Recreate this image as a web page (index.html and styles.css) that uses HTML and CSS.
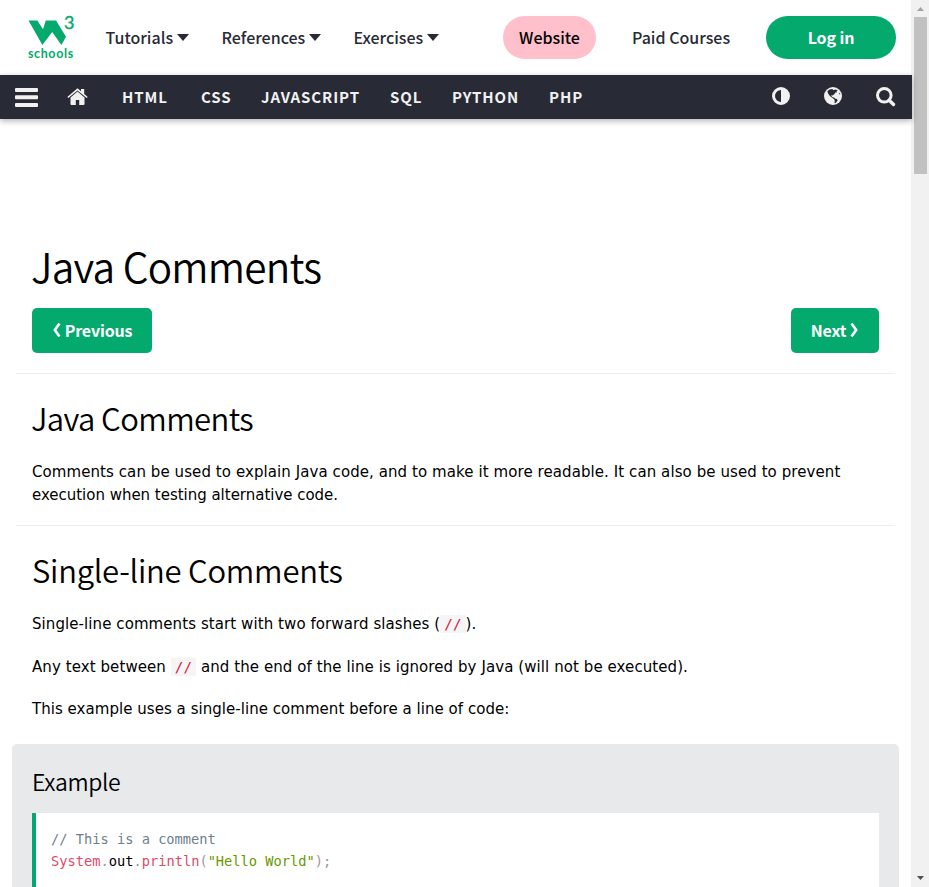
FILE: index.html
```
<!DOCTYPE html>
<html lang="en">
<head>
<meta charset="utf-8">
<title>Java Comments</title>
<link rel="stylesheet" href="styles.css">
</head>
<body>
<div class="page">
  <header class="topbar">
    <a class="logo">
      <svg width="46" height="46" viewBox="0 0 46 46">
        <path fill="#04aa6d" d="M0.5 5.5H9.3L15 14.2L17.8 5.5H28L38 21.8L33.4 30L24.2 17L14.4 30Z"/>
        <text class="logo-three" x="36" y="14">3</text>
        <text class="logo-name" x="0" y="43">schools</text>
      </svg>
    </a>
    <a class="menu tutorials">Tutorials<i class="caret"></i></a>
    <a class="menu references">References<i class="caret"></i></a>
    <a class="menu exercises">Exercises<i class="caret"></i></a>
    <a class="pill website">Website</a>
    <a class="menu paid">Paid Courses</a>
    <a class="pill login">Log in</a>
  </header>
  <nav class="subnav">
    <svg class="bars" width="23" height="19" viewBox="0 0 23 19"><path fill="#f1f1f1" d="M1 0H22Q23 0 23 1V3Q23 4 22 4H1Q0 4 0 3V1Q0 0 1 0ZM1 7.3H22Q23 7.3 23 8.3V10.3Q23 11.3 22 11.3H1Q0 11.3 0 10.3V8.3Q0 7.3 1 7.3ZM1 15H22Q23 15 23 16V18Q23 19 22 19H1Q0 19 0 18V16Q0 15 1 15Z"/></svg>
    <svg class="home" width="21" height="18" viewBox="0 0 21 18"><g fill="#f1f1f1"><path d="M10.5 3.6L17.5 9.5V16Q17.5 17 16.5 17H12.2V12H8.8V17H4.5Q3.5 17 3.5 16V9.5Z"/><path d="M10.5 .3L14 3.2V1H17.2V5.9L20.7 8.9L19.7 10.1L10.5 2.4L1.3 10.1L.3 8.9Z"/></g></svg>
    <a class="html">HTML</a>
    <a class="css">CSS</a>
    <a class="js">JAVASCRIPT</a>
    <a class="sql">SQL</a>
    <a class="python">PYTHON</a>
    <a class="php">PHP</a>
    <div class="tools">
      <svg width="18" height="18" viewBox="0 0 18 18"><circle cx="9" cy="9" r="7.5" fill="none" stroke="#f1f1f1" stroke-width="3"/><path fill="#f1f1f1" d="M9 1A8 8 0 0 1 9 17Z"/></svg>
      <svg width="18" height="18" viewBox="0 0 18 18"><circle cx="9" cy="9" r="9" fill="#f1f1f1"/><path fill="#282a35" d="M3.3 4.2L5.5 2.6L8.5 2L9.4 3.2L11.3 2.4L13.8 3.2L12.5 4.3L13 5.6L11.1 5.4L10.6 7L8.6 8.4L7.2 8.1L8 10L10 10.5L11.5 11.7L9.8 12L8.2 10.8L6.1 9.3L4.4 6.9ZM10.1 12.1L12.6 11.7L13.7 13.4L11.7 15.9L10.5 16.3L10.8 14.2ZM15.1 5.4L16.5 7.1L15.3 7.6Z"/></svg>
      <svg width="20" height="20" viewBox="0 0 20 20"><path d="M13.2 13.2L17.5 17.5" stroke="#f1f1f1" stroke-width="3.4" stroke-linecap="round"/><circle cx="8.3" cy="8.3" r="6.8" fill="none" stroke="#f1f1f1" stroke-width="3"/></svg>
    </div>
  </nav>
  <main class="main">
    <h1>Java Comments</h1>
    <div class="pager">
      <a class="btn prev"><svg width="9" height="14" viewBox="0 0 9 14"><path d="M7.5 .5L2.8 7L7.5 13.5" fill="none" stroke="#fff" stroke-width="2.6"/></svg><span>Previous</span></a>
      <a class="btn next"><span>Next</span><svg width="9" height="14" viewBox="0 0 9 14"><path d="M1.5 .5L6.2 7L1.5 13.5" fill="none" stroke="#fff" stroke-width="2.6"/></svg></a>
    </div>
    <hr>
    <section class="intro">
      <h2>Java Comments</h2>
      <p>Comments can be used to explain Java code, and to make it more readable. It can also be used to prevent<br><span class="tail">execution when testing alternative code.</span></p>
    </section>
    <hr>
    <section>
      <h2 class="single">Single-line Comments</h2>
      <p>Single-line comments start with two forward slashes (<code>//</code>).</p>
      <p>Any text between <code>//</code> and the end of the line is ignored by Java (will not be executed).</p>
      <p class="lead-in">This example uses a single-line comment before a line of code:</p>
    </section>
    <div class="example">
      <h3>Example</h3>
      <pre><span class="comment">// This is a comment</span>
<span class="name">System</span><span class="punct">.</span>out<span class="punct">.</span><span class="name">println</span><span class="punct">(</span><span class="string">"Hello World"</span><span class="punct">);</span></pre>
    </div>
  </main>
</div>
<aside class="scrollbar">
  <svg width="7" height="4" viewBox="0 0 7 4"><path fill="#a3a3a3" d="M0 4L3.5 0L7 4Z"/></svg>
  <div class="thumb"></div>
  <svg class="down" width="7" height="4" viewBox="0 0 7 4"><path fill="#505050" d="M0 0H7L3.5 4Z"/></svg>
</aside>
</body>
</html>
```
FILE: styles.css
```
* { box-sizing: border-box; }
body {
  margin: 0;
  height: 887px;
  display: flex;
  overflow: hidden;
  background: #fff;
  color: #000;
  font: 15px/22.5px "DejaVu Sans", sans-serif;
}
.page { width: 911px; height: 887px; }
.topbar, .subnav {
  display: flex;
  align-items: center;
  font-family: "Noto Sans CJK SC", sans-serif;
  white-space: nowrap;
}
.topbar { height: 75px; padding-left: 28px; color: #282a35; font-size: 16px; font-weight: 500; }
.logo { width: 77.5px; height: 46px; }
.logo svg { display: block; overflow: visible; }
.logo-three { font: 400 18px Lato, sans-serif; fill: #04aa6d; stroke: #04aa6d; stroke-width: .4px; }
.logo-name { font: 700 12.5px Lato, sans-serif; letter-spacing: .6px; fill: #04aa6d; }
.menu { display: flex; align-items: center; }
.caret { border: 6px solid transparent; border-top: 7px solid #282a35; border-bottom: 0; margin-left: 4px; }
.tutorials { width: 116px; }
.references { width: 132px; }
.exercises { width: 149.5px; }
.pill { display: flex; align-items: center; justify-content: center; height: 43px; border-radius: 22px; }
.website { width: 93px; background: #ffc0cb; color: #000; margin-right: 36px; }
.paid { width: 134px; }
.login { width: 130px; height: 43px; background: #04aa6d; color: #fff; font-weight: 700; letter-spacing: -.1px; }
.subnav {
  position: relative;
  height: 44px;
  margin-right: -1px;
  padding-left: 15px;
  background: #282a35;
  color: #f1f1f1;
  font-size: 15px;
  font-weight: 700;
  letter-spacing: .9px;
  box-shadow: 0 2px 6px rgba(0, 0, 0, .3);
}
.bars { margin-right: 29px; }
.home { margin-right: 34px; }
.html { width: 79px; }
.css { width: 60px; }
.js { width: 129px; }
.sql { width: 62px; }
.python { width: 97px; }
.php { width: 223px; }
.tools { display: flex; gap: 34px; }
.main { height: 768px; overflow: hidden; padding: 122px 16px 0; }
h1, h2, h3 { margin: 0; padding-left: 15px; font-family: "Noto Sans CJK SC", sans-serif; font-weight: 350; }
h1 { font-size: 40.5px; line-height: 49px; letter-spacing: -.75px; }
.pager { display: flex; justify-content: space-between; padding: 0 16px; margin-top: 18px; }
.btn {
  display: flex;
  align-items: center;
  justify-content: center;
  gap: 4px;
  height: 45px;
  padding-bottom: 1px;
  border-radius: 5px;
  background: #04aa6d;
  color: #fff;
  font: 700 16px "Noto Sans CJK SC", sans-serif;
  letter-spacing: -.15px;
}
.prev { width: 120px; }
.next { width: 88px; }
hr { height: 1px; margin: 20px 0 0; border: 0; background: #eee; }
h2 { font-size: 31px; line-height: 48px; padding-top: 20px; letter-spacing: -.6px; }
.single { padding-left: 16px; letter-spacing: -.25px; }
p { margin: 0; padding: 0 16px; white-space: nowrap; line-height: 23px; letter-spacing: .08px; }
.tail { letter-spacing: -.02px; }
h2 + p { margin-top: 19px; }
.intro { margin-bottom: -2px; }
p + p { margin-top: 20px; }
p + .lead-in { margin-top: 19px; letter-spacing: .04px; }
code { padding: 1px 4px; background: #f5f5f5; color: #dc143c; font: 14.2px "DejaVu Sans Mono", monospace; }
.example { width: 887px; height: 200px; margin: 23px 0 0 -4px; padding: 19px 20px; border-radius: 5px; background: #e7e9eb; }
h3 { font-size: 23px; line-height: 36px; padding: 0; letter-spacing: -.35px; }
pre {
  height: 160px;
  margin: 14px 0 0;
  padding: 15px;
  border-left: 4px solid #04aa6d;
  background: #fff;
  font: 13.7px/22px "DejaVu Sans Mono", monospace;
}
.comment { color: #708090; }
.name { color: #dd4a68; }
.punct { color: #999; }
.string { color: #690; }
.scrollbar { display: flex; flex-direction: column; align-items: center; width: 18px; height: 887px; padding: 7px 0; background: #f1f1f1; }
.scrollbar svg { display: block; }
.thumb { width: 13px; height: 157px; margin-top: 6px; background: #c1c1c1; }
.down { margin-top: auto; }
```
